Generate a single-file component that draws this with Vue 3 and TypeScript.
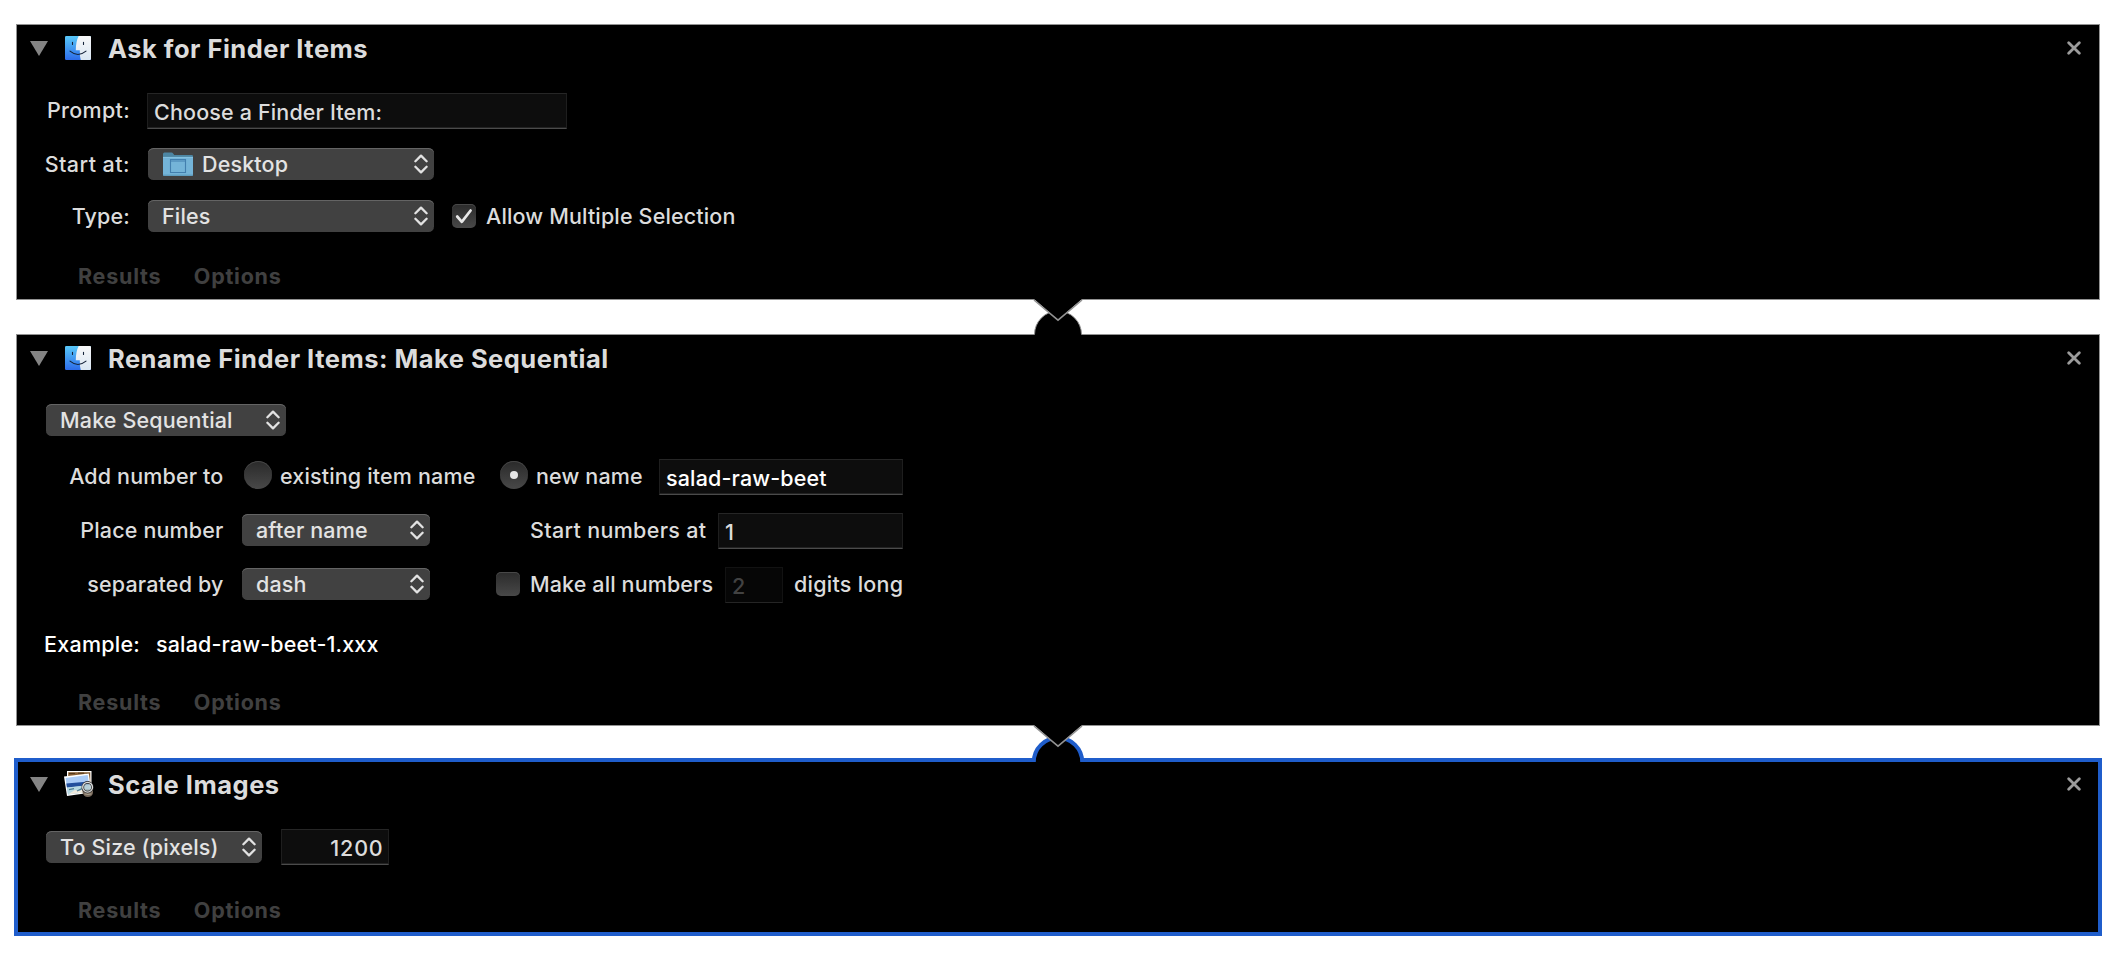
<script setup lang="ts">
import { defineComponent, h } from 'vue'

const DisclosureTriangle = defineComponent({
  render: () =>
    h('svg', { width: 18, height: 15, viewBox: '0 0 18 15' }, [
      h('path', { d: 'M0 0H18L9 15Z', fill: '#848484' }),
    ]),
})

const FinderIcon = defineComponent({
  render: () =>
    h('svg', { width: 26, height: 24, viewBox: '0 0 26 24' }, [
      h('defs', [
        h('linearGradient', { id: 'finder-blue', x1: 0, y1: 0, x2: 0, y2: 1 }, [
          h('stop', { offset: 0, 'stop-color': '#58c8f8' }),
          h('stop', { offset: 1, 'stop-color': '#2d6cea' }),
        ]),
        h('linearGradient', { id: 'finder-white', x1: 0, y1: 0, x2: 0, y2: 1 }, [
          h('stop', { offset: 0, 'stop-color': '#f8f8f9' }),
          h('stop', { offset: 1, 'stop-color': '#d9e6f3' }),
        ]),
      ]),
      h('rect', { width: 26, height: 24, rx: 1.2, fill: 'url(#finder-blue)' }),
      h('path', {
        d: 'M13.7 0H24.8Q26 0 26 1.2V22.8Q26 24 24.8 24H15.8Q14.8 21 14.8 14.2H10.8Q10.8 5.5 13.7 0Z',
        fill: 'url(#finder-white)',
      }),
      h('path', {
        d: 'M7.5 6.3V8.5M18.5 6.3V8.5M5 15.2Q13 21.8 21 15.2',
        fill: 'none',
        stroke: '#16243a',
        'stroke-width': 1.1,
        'stroke-linecap': 'round',
      }),
    ]),
})

const ChevronPair = defineComponent({
  render: () =>
    h('svg', { width: 14, height: 20, viewBox: '0 0 14 20' }, [
      h('path', {
        d: 'M1.4 7.2L7 1.6L12.6 7.2M1.4 12.8L7 18.4L12.6 12.8',
        fill: 'none',
        stroke: '#e2e2e2',
        'stroke-width': 2.3,
        'stroke-linecap': 'round',
        'stroke-linejoin': 'round',
      }),
    ]),
})

const CloseIcon = defineComponent({
  render: () =>
    h('svg', { width: 14, height: 14, viewBox: '0 0 14 14' }, [
      h('path', {
        d: 'M1.7 1.7L12.3 12.3M12.3 1.7L1.7 12.3',
        stroke: '#9c9c9c',
        'stroke-width': 2.8,
        'stroke-linecap': 'round',
      }),
    ]),
})
</script>

<template>
  <main class="workflow">
    <section class="action ask">
      <header>
        <DisclosureTriangle class="triangle" />
        <FinderIcon class="app-icon" />
        <h2>Ask for Finder Items</h2>
        <CloseIcon class="close" />
      </header>
      <div class="row prompt">
        <label class="raise wide">Prompt:</label>
        <div class="field">Choose a Finder Item:</div>
      </div>
      <div class="row start">
        <label class="loose">Start at:</label>
        <div class="select">
          <svg class="folder" width="30" height="25" viewBox="0 0 30 25">
            <path d="M0 5V2Q0 .5 1.5 .5H8.5Q9.5 .5 10.3 1.8L11.3 3H28.8Q30 3 30 4.2V7H0Z" fill="#4d86a3" />
            <path d="M0 5H30V22.8Q30 24 28.8 24H1.2Q0 24 0 22.8Z" fill="#74b4d8" />
            <path d="M0 5.4H30" stroke="#8bc7e5" stroke-width=".8" />
            <path d="M0 23.2H30" stroke="#5794b6" stroke-width="1" />
            <path d="M7.5 7.5H22.5V20.5H7.5ZM7.5 9H22.5" fill="none" stroke="#427fae" stroke-width="1.1" />
          </svg>
          <span>Desktop</span><ChevronPair class="chevrons" />
        </div>
      </div>
      <div class="row type">
        <label>Type:</label>
        <div class="select"><span>Files</span><ChevronPair class="chevrons" /></div>
        <i class="checkbox">
          <svg width="24" height="24" viewBox="0 0 24 24">
            <path d="M5.2 12.5L9.8 17.8L18.6 6.5" fill="none" stroke="#e8e8e8" stroke-width="2.7" stroke-linecap="round" stroke-linejoin="round" />
          </svg>
        </i>
        <span>Allow Multiple Selection</span>
      </div>
      <footer><b>Results</b><b>Options</b></footer>
      <svg class="arrow" width="52" height="24" viewBox="0 0 52 24">
        <path d="M2 0L26 21L50 0Z" />
        <path class="edge" d="M2 1L26 21.2L50 1" />
      </svg>
    </section>

    <section class="action rename">
      <svg class="dome" width="56" height="28" viewBox="0 0 56 28">
        <path d="M4.5 28V26.5A23.5 23.5 0 0 1 51.5 26.5V28Z" />
        <path class="edge" d="M4.5 26.5A23.5 23.5 0 0 1 51.5 26.5" />
      </svg>
      <header>
        <DisclosureTriangle class="triangle" />
        <FinderIcon class="app-icon" />
        <h2>Rename Finder Items: Make Sequential</h2>
        <CloseIcon class="close" />
      </header>
      <div class="row mode">
        <div class="select"><span>Make Sequential</span><ChevronPair class="chevrons" /></div>
      </div>
      <div class="row naming">
        <label class="raise">Add number to</label>
        <i class="radio"></i>
        <span class="raise existing">existing item name</span>
        <i class="radio chosen"></i>
        <span class="raise new-name">new name</span>
        <div class="field strong">salad-raw-beet</div>
      </div>
      <div class="row placing">
        <label class="raise">Place number</label>
        <div class="select raise"><span>after name</span><ChevronPair class="chevrons" /></div>
        <span class="raise start-at">Start numbers at</span>
        <div class="field">1</div>
      </div>
      <div class="row separating">
        <label class="raise">separated by</label>
        <div class="select raise"><span>dash</span><ChevronPair class="chevrons" /></div>
        <i class="checkbox raise"></i>
        <span class="raise all-numbers">Make all numbers</span>
        <div class="field disabled">2</div>
        <span class="raise digits">digits long</span>
      </div>
      <div class="row example"><span class="caption">Example:</span><span>salad-raw-beet-1.xxx</span></div>
      <footer><b>Results</b><b>Options</b></footer>
      <svg class="arrow" width="52" height="24" viewBox="0 0 52 24">
        <path d="M2 0L26 21L50 0Z" />
        <path class="edge" d="M2 1L26 21.2L50 1" />
      </svg>
    </section>

    <section class="action scale">
      <svg class="dome" width="56" height="28" viewBox="0 0 56 28">
        <path d="M4 28V27A24 24 0 0 1 52 27V28Z" />
        <path class="edge" d="M3.8 28A24.2 24.2 0 0 1 52.2 28" />
      </svg>
      <header>
        <DisclosureTriangle class="triangle" />
        <svg class="app-icon photos" width="30" height="26" viewBox="0 0 30 26">
          <path d="M3 0H27.5V18H3Z" fill="#fff" />
          <path d="M4.2 1.2H26.3V17H4.2Z" fill="#8a6136" />
          <path d="M5 2.6H11M14 2.2H20M22 3H25.5" stroke="#4f3518" stroke-width="1" />
          <path d="M0 5.6L24.8 2.6L27.4 21.6L3 25Z" fill="#fff" />
          <path d="M1.5 6.9L23.7 4.1L26 20.4L4 23.5Z" fill="#a9cbf7" />
          <path d="M2.3 12.6L24.8 10.4L25.3 14.2L3 16.8Z" fill="#234f9c" />
          <path d="M3 16.6L25.3 14L26 20.4L4 23.5Z" fill="#b8d9e2" />
          <path d="M5 22.8L11 19L16 20L20 17L25 20.2V21L5 23.3Z" fill="#eee9dc" />
          <path d="M5 18.6L10 17.6M13 20L18 17.6" stroke="#537f94" stroke-width="1.2" />
          <path d="M18.5 18H29V22Q28 26 23.8 26Q19.4 26 18.5 21Z" fill="#76685a" />
          <circle cx="23.6" cy="16.2" r="4.8" fill="#b4cdd6" fill-opacity=".8" stroke="#292929" stroke-width="2.6" />
          <circle cx="23.6" cy="16.2" r="4.9" fill="none" stroke="#ddd" stroke-width="1.3" />
          <path d="M20.5 22.8Q24 24.2 27.5 22.8" fill="none" stroke="#aaa08f" stroke-width="1.2" />
        </svg>
        <h2>Scale Images</h2>
        <CloseIcon class="close" />
      </header>
      <div class="row sizing">
        <div class="select"><span>To Size (pixels)</span><ChevronPair class="chevrons" /></div>
        <div class="field number">1200</div>
      </div>
      <footer><b>Results</b><b>Options</b></footer>
    </section>
  </main>
</template>

<style>
body {
  margin: 0;
  background: #fff;
}
</style>

<style scoped>
.workflow {
  box-sizing: border-box;
  width: 2116px;
  height: 958px;
  padding: 24px 16px 0;
  overflow: hidden;
  font: 450 21.5px/26px Inter, "Liberation Sans", sans-serif;
  letter-spacing: 0.15px;
  color: #dcdcdc;
  white-space: nowrap;
}
svg {
  display: block;
  flex: none;
}
.action {
  position: relative;
  box-sizing: border-box;
  border: 1px solid #929292;
  background: #000;
}
.ask {
  height: 276px;
}
.rename {
  height: 392px;
  margin-top: 34px;
}
.scale {
  height: 178px;
  margin: 32px -2px 0;
  border: 4px solid #1f5dcb;
}
header {
  display: flex;
  align-items: center;
  height: 48px;
  padding: 0 18px 0 13px;
}
.scale header {
  height: 46px;
  padding: 0 17px 0 12px;
}
.triangle {
  margin: 0 17px 1px 0;
}
.app-icon {
  margin: 0 17px 2px 0;
}
.photos {
  margin: 0 14px 2px -1px;
}
h2 {
  margin: 0;
  font-size: 25.5px;
  line-height: 32px;
  font-weight: 700;
  letter-spacing: 0.49px;
}
.close {
  margin: 0 0 2px auto;
}
.scale h2,
.scale .triangle {
  margin-bottom: 1px;
}
.row {
  display: flex;
  align-items: center;
  height: 36px;
}
.row > * {
  flex: none;
}
label {
  box-sizing: border-box;
  text-align: right;
}
.raise {
  margin-bottom: 2px;
}
.field {
  box-sizing: border-box;
  height: 36px;
  padding: 5px 7px 0 6px;
  border: 1px solid #1e1e1e;
  border-top-color: #262626;
  border-bottom: 1px solid #4b4b4b;
  box-shadow: inset 0 -1px #222;
  background: #0d0d0d;
}
.select {
  box-sizing: border-box;
  display: flex;
  align-items: center;
  height: 32px;
  padding: 0 6.5px 0 14px;
  border-radius: 5.5px;
  background: #414141;
  box-shadow: inset 0 1px #646464;
  color: #e3e3e3;
}
.chevrons {
  margin-left: auto;
}
.checkbox {
  width: 24px;
  height: 24px;
  border-radius: 5px;
  background: linear-gradient(#2b2b2b, #484848);
  box-shadow: inset 0 1px #484848;
}
.radio {
  display: flex;
  align-items: center;
  justify-content: center;
  width: 28px;
  height: 28px;
  margin-bottom: 4px;
  border-radius: 50%;
  background: linear-gradient(#2a2a2a, #484848);
  box-shadow: inset 0 1px #464646;
}
.chosen::after {
  content: "";
  width: 8px;
  height: 8px;
  border-radius: 50%;
  background: #e6e6e6;
}
footer {
  display: flex;
  align-items: center;
  gap: 32.5px;
  height: 32px;
  padding-left: 61px;
  color: #404040;
  letter-spacing: 0.76px;
}
footer b {
  font-weight: 700;
}

.ask label {
  width: 113px;
}
.ask .select {
  width: 286px;
  margin-left: 18px;
}
.prompt {
  margin-top: 20px;
}
.prompt .raise {
  margin-bottom: 3px;
}
.prompt .field {
  width: 420px;
  margin-left: 17px;
}
.wide {
  letter-spacing: 0.3px;
}
.loose {
  letter-spacing: 0.45px;
}
.start {
  height: 32px;
  margin-top: 19px;
}
.folder {
  margin: 0 9px 0 1px;
}
.type {
  height: 32px;
  margin-top: 20px;
}
.type .checkbox {
  margin: 0 10px 0 18px;
}
.ask footer {
  margin-top: 28px;
}

.mode {
  height: 32px;
  margin-top: 21px;
  padding-left: 29px;
}
.mode .select {
  width: 240px;
}
.rename label {
  width: 206.5px;
}
.naming {
  margin-top: 23px;
}
.naming .radio {
  margin-left: 20.5px;
}
.naming .raise {
  margin-bottom: 3px;
}
.existing {
  width: 197px;
  margin-left: 8px;
}
.naming .chosen {
  margin-left: 23px;
}
.new-name {
  width: 106px;
  margin-left: 8px;
}
.naming .field {
  width: 244px;
  margin-left: 17px;
}
.strong {
  font-weight: 550;
  color: #fff;
}
.placing,
.separating {
  margin-top: 18px;
}
.placing .select,
.separating .select {
  width: 188px;
  margin-left: 18.5px;
}
.start-at {
  width: 178px;
  margin-left: 100px;
  letter-spacing: 0.32px;
}
.placing .field {
  width: 185px;
  margin-left: 10px;
}
.separating .checkbox {
  margin-left: 66px;
}
.all-numbers {
  width: 184px;
  margin-left: 10px;
  letter-spacing: 0.12px;
}
.separating .field {
  width: 58px;
  margin-left: 11px;
}
.separating .disabled {
  border-color: #121212;
  border-bottom-color: #252525;
  box-shadow: none;
  background: #060606;
  color: #424242;
}
.digits {
  margin-left: 11px;
  letter-spacing: 0.25px;
}
.example {
  height: 32px;
  margin-top: 25px;
  padding-left: 27px;
  color: #fff;
}
.caption {
  width: 112px;
  letter-spacing: 0.25px;
}
.rename footer {
  margin-top: 26px;
}

.sizing {
  margin-top: 21px;
  padding-left: 28px;
}
.sizing .select {
  width: 216px;
}
.sizing .number {
  width: 108px;
  margin-left: 19px;
  padding-right: 4.5px;
  text-align: right;
  letter-spacing: 0.8px;
}
.scale footer {
  margin-top: 29px;
  padding-left: 60px;
}

.arrow {
  position: absolute;
  z-index: 3;
  left: 1015px;
  bottom: -24px;
}
.dome {
  position: absolute;
  z-index: 1;
  left: 1013px;
  top: -27px;
}
.scale .dome {
  left: 1012px;
  top: -28px;
}
.edge {
  fill: none;
  stroke: #929292;
  stroke-width: 1.6;
}
.dome .edge {
  stroke-width: 1;
}
.scale .dome .edge {
  stroke: #1f5dcb;
  stroke-width: 4;
}
</style>
